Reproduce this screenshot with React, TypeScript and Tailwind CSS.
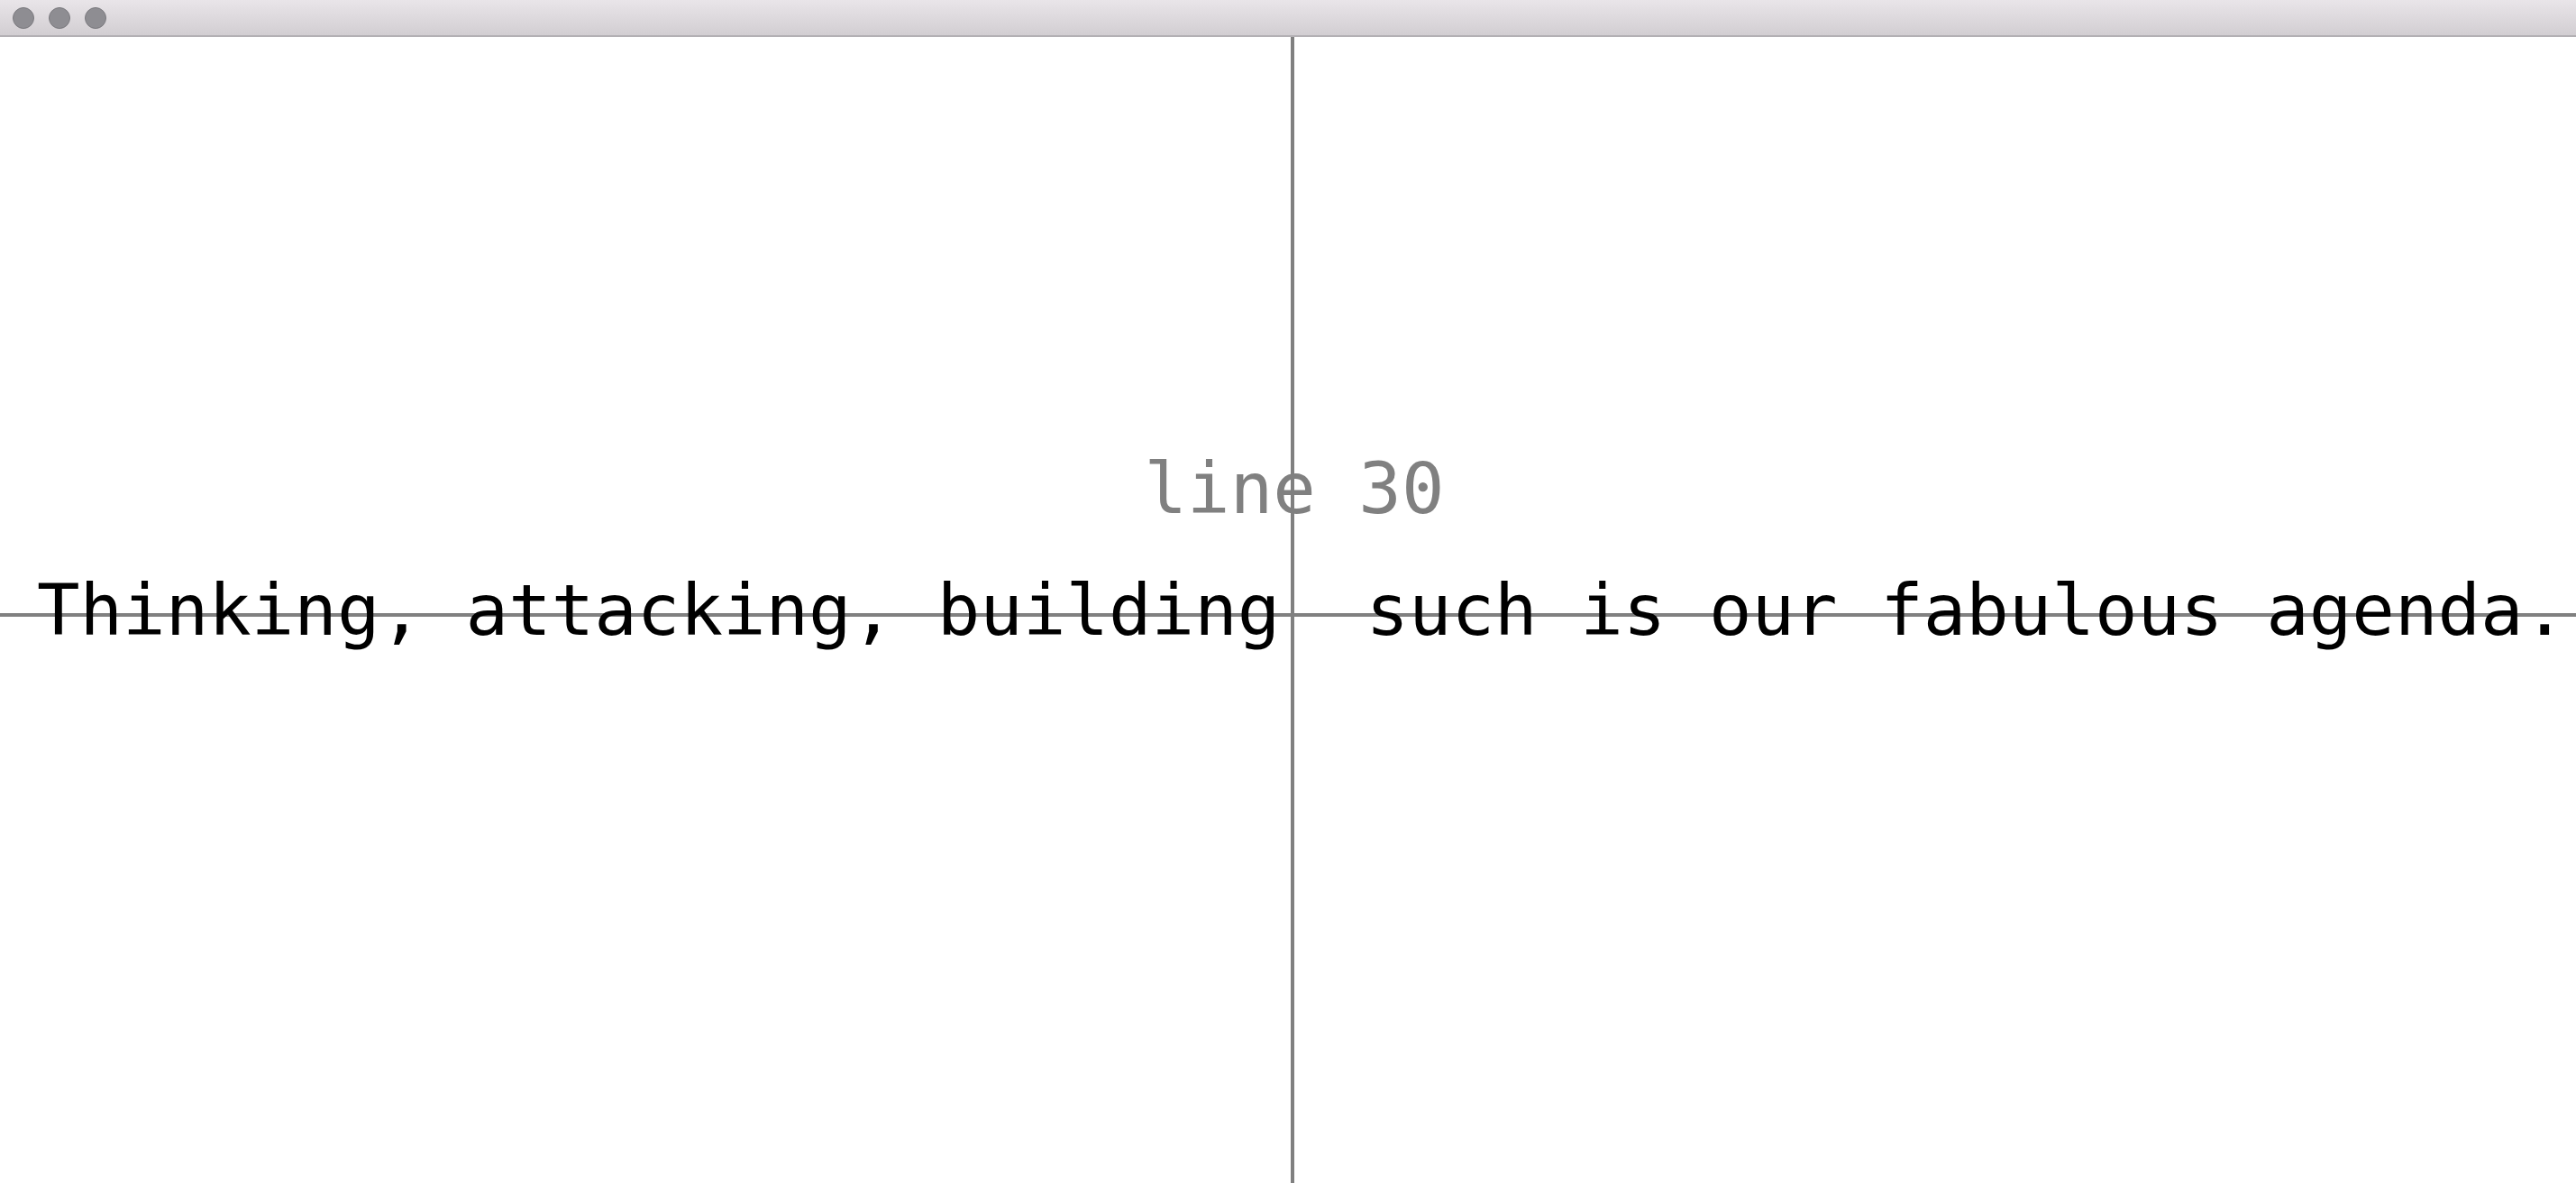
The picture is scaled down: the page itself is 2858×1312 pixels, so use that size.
// Editor preview window: a title bar, a crosshair guide and the current line.

const MONO = "font-['DejaVu_Sans_Mono','Liberation_Mono',monospace]";

function TitleBar() {
  return (
    <div className="flex h-[41px] shrink-0 items-center gap-4 border-b-2 border-[#b3b0b4] bg-gradient-to-b from-[#e9e5e9] to-[#d2ced2] pl-[14px]">
      {[0, 1, 2].map((i) => (
        <span key={i} className="h-6 w-6 rounded-full border border-[#7b7a7f] bg-[#8e8d92]" />
      ))}
    </div>
  );
}

export default function App() {
  return (
    <div className="flex h-screen w-full flex-col overflow-hidden bg-white">
      <TitleBar />
      <div className="relative flex-1">
        {/* crosshair guides sit behind the text */}
        <div className="absolute left-[1432px] top-0 bottom-0 w-1 bg-[#808080]" />
        <div className="absolute left-0 right-0 top-[639px] h-1 bg-[#808080]" />

        <div className={`relative pt-[434px] text-[79px] leading-[135px] ${MONO}`}>
          <div className="pl-[14px] text-center text-[#808080]">line 30</div>
          <div className="whitespace-pre pl-[41px] text-black">
            Thinking, attacking, building  such is our fabulous agenda.
          </div>
        </div>
      </div>
    </div>
  );
}
